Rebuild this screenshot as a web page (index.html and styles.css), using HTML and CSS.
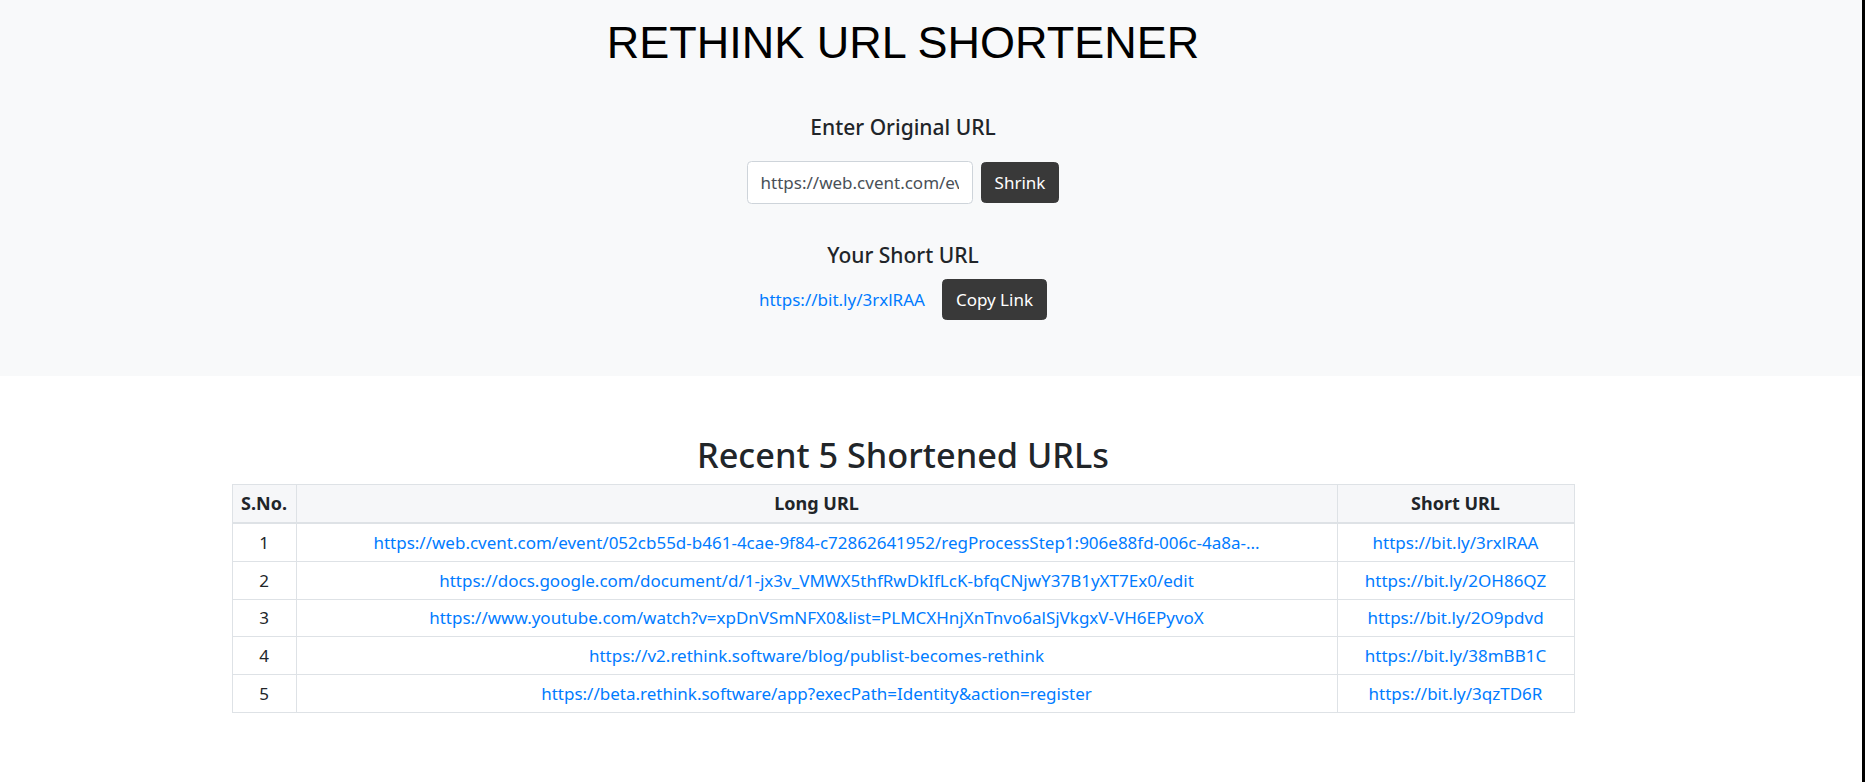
FILE: index.html
```html
<!DOCTYPE html>
<html lang="en">
<head>
<meta charset="utf-8">
<title>Rethink URL Shortener</title>
<link rel="stylesheet" href="styles.css">
</head>
<body>
<div class="page">
  <header class="hero">
    <div class="hero-inner">
      <h1 class="title">RETHINK URL SHORTENER</h1>
      <h5 class="label label-first">Enter Original URL</h5>
      <form class="shrink-form">
        <input class="url-input" type="text" value="https://web.cvent.com/event/052cb55d-b461-4cae-9f84-c72862641952">
        <button class="btn" type="button">Shrink</button>
      </form>
      <h5 class="label label-second">Your Short URL</h5>
      <div class="result">
        <a class="link" href="#">https://bit.ly/3rxlRAA</a>
        <button class="btn" type="button">Copy Link</button>
      </div>
    </div>
  </header>
  <section class="recent">
    <h2 class="recent-title">Recent 5 Shortened URLs</h2>
    <table class="url-table">
      <thead>
        <tr>
          <th class="col-no">S.No.</th>
          <th>Long URL</th>
          <th class="col-short">Short URL</th>
        </tr>
      </thead>
      <tbody>
        <tr>
          <td>1</td>
          <td><a class="link" href="#">https://web.cvent.com/event/052cb55d-b461-4cae-9f84-c72862641952/regProcessStep1:906e88fd-006c-4a8a-...</a></td>
          <td><a class="link" href="#">https://bit.ly/3rxlRAA</a></td>
        </tr>
        <tr>
          <td>2</td>
          <td><a class="link" href="#">https://docs.google.com/document/d/1-jx3v_VMWX5thfRwDkIfLcK-bfqCNjwY37B1yXT7Ex0/edit</a></td>
          <td><a class="link" href="#">https://bit.ly/2OH86QZ</a></td>
        </tr>
        <tr>
          <td>3</td>
          <td><a class="link" href="#">https://www.youtube.com/watch?v=xpDnVSmNFX0&amp;list=PLMCXHnjXnTnvo6alSjVkgxV-VH6EPyvoX</a></td>
          <td><a class="link" href="#">https://bit.ly/2O9pdvd</a></td>
        </tr>
        <tr>
          <td>4</td>
          <td><a class="link" href="#">https://v2.rethink.software/blog/publist-becomes-rethink</a></td>
          <td><a class="link" href="#">https://bit.ly/38mBB1C</a></td>
        </tr>
        <tr>
          <td>5</td>
          <td><a class="link" href="#">https://beta.rethink.software/app?execPath=Identity&amp;action=register</a></td>
          <td><a class="link" href="#">https://bit.ly/3qzTD6R</a></td>
        </tr>
      </tbody>
    </table>
  </section>
</div>
</body>
</html>
```

FILE: styles.css
```css
* { box-sizing: border-box; }

html {
  background: #000;
  height: 100%;
}

body {
  margin: 0;
  width: calc(100% - 3px);
  min-height: 100vh;
  background: #fff;
  font-family: "Noto Sans", "Open Sans", sans-serif;
  font-size: 17px;
  line-height: 27px;
  color: #212529;
}

.page {
  display: flex;
  flex-direction: column;
}

.hero {
  background: #f8f9fa;
  height: 376px;
}

.hero-inner {
  display: flex;
  flex-direction: column;
  align-items: center;
  padding-right: 56px;
}

.title {
  margin: 16px 0 0;
  font-family: "Liberation Sans", Arial, sans-serif;
  font-weight: 400;
  font-size: 45px;
  line-height: 54px;
  color: #000;
}

.label {
  margin: 0;
  font-size: 21px;
  line-height: 27px;
  font-weight: 500;
  color: #212529;
}

.label-first { margin-top: 44px; }
.label-second { margin-top: 38px; }

.shrink-form {
  display: flex;
  align-items: center;
  gap: 8px;
  margin-top: 20px;
}

.url-input {
  width: 226px;
  height: 43px;
  padding: 6px 13px;
  border: 1px solid #ced4da;
  border-radius: 4.5px;
  background: #fff;
  font-family: inherit;
  font-size: 17px;
  color: #495057;
}

.btn {
  height: 41px;
  padding: 0 13px;
  border: 1px solid #393939;
  border-radius: 4.5px;
  background: #393939;
  color: #fff;
  font-family: inherit;
  font-size: 17px;
  line-height: 27px;
}

.result {
  display: flex;
  align-items: center;
  gap: 17px;
  margin-top: 10px;
}

.link {
  color: #007bff;
  text-decoration: none;
}

.recent {
  display: flex;
  flex-direction: column;
  align-items: center;
  padding-right: 56px;
}

.recent-title {
  margin: 57px 0 8px;
  font-size: 34.3px;
  line-height: 43px;
  font-weight: 500;
  color: #212529;
}

.url-table {
  width: 1343px;
  border-collapse: collapse;
  border: 1px solid #dee2e6;
  text-align: center;
}

.url-table th,
.url-table td {
  border: 1px solid #dee2e6;
  padding: 4.9px 5px;
}

.url-table th {
  padding: 5px 5px;
  background: #f6f7f9;
  border-bottom: 2px solid #dee2e6;
  font-size: 18px;
  font-weight: 700;
}

.col-no { width: 64px; }
.col-short { width: 237px; }
```
